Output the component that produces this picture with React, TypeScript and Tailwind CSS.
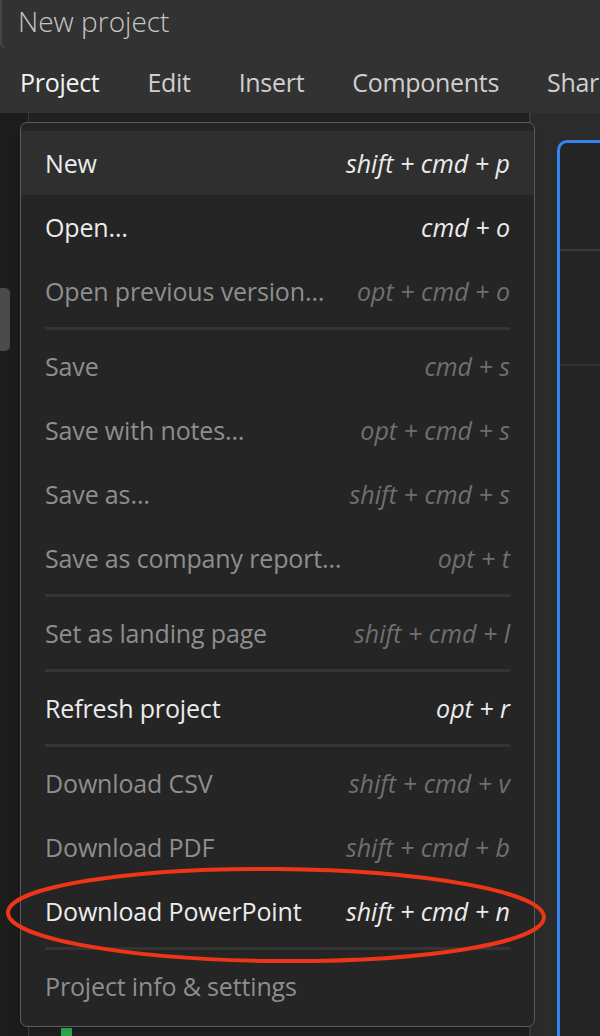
import React from "react";

type Item =
  | { sep: true }
  | { sep?: false; label: string; sc?: string; bright?: boolean; hl?: boolean };

const items: Item[] = [
  { label: "New", sc: "shift + cmd + p", bright: true, hl: true },
  { label: "Open…", sc: "cmd + o", bright: true },
  { label: "Open previous version…", sc: "opt + cmd + o" },
  { sep: true },
  { label: "Save", sc: "cmd + s" },
  { label: "Save with notes…", sc: "opt + cmd + s" },
  { label: "Save as…", sc: "shift + cmd + s" },
  { label: "Save as company report…", sc: "opt + t" },
  { sep: true },
  { label: "Set as landing page", sc: "shift + cmd + l" },
  { sep: true },
  { label: "Refresh project", sc: "opt + r", bright: true },
  { sep: true },
  { label: "Download CSV", sc: "shift + cmd + v" },
  { label: "Download PDF", sc: "shift + cmd + b" },
  { label: "Download PowerPoint", sc: "shift + cmd + n", bright: true },
  { sep: true },
  { label: "Project info & settings" },
];

export default function App() {
  return (
    <div
      className="relative w-[600px] h-[1036px] overflow-hidden bg-[#1c1c1c] flex flex-col"
      style={{ fontFamily: '"Open Sans", "Noto Sans", sans-serif' }}
    >
      {/* Header */}
      <div className="h-[113px] bg-[#323232] flex flex-col shrink-0">
        <div className="h-[50px] flex items-start">
          <div className="w-[5px] h-[48px] border-l-[2px] border-b-[2px] border-[#474747] rounded-bl-[6px]" />
          <div className="ml-[13px] mt-[3px] text-[28px] leading-[36px] font-light text-[#c6c6c6] tracking-[0px]">
            New project
          </div>
        </div>
        <div className="flex items-center gap-[48px] h-[63px] pl-[20px] text-[25px] leading-[30px] tracking-[-0.3px] whitespace-nowrap">
          <span className="text-[#f2f2f2] font-medium">Project</span>
          <span className="text-[#cfcfcf]">Edit</span>
          <span className="text-[#cfcfcf]">Insert</span>
          <span className="text-[#cfcfcf]">Components</span>
          <span className="text-[#cfcfcf]">Share</span>
        </div>
      </div>

      {/* Body */}
      <div className="flex flex-1 min-h-0">
        <div className="w-[28px] shrink-0 bg-[#1c1c1c] pt-[175px]">
          <div className="w-[10px] h-[63px] rounded-r-[5px] bg-[#4a4a4a]" />
        </div>
        <div className="w-[503px] shrink-0 bg-[#202020] border-l-[1.5px] border-r-[2px] border-[#3a3a3a] flex flex-col justify-end pl-[32px]">
          <div className="w-[11px] h-[8px] bg-[#2fae52]" />
        </div>
        <div className="flex-1 bg-[#2b2b2b] pt-[27px] pl-[26px] flex flex-col">
          <div className="flex-1 border-l-[3px] border-t-[3px] border-[#3584f0] rounded-tl-[10px] bg-[#252525] flex flex-col">
            <div className="h-[108px] border-b-[2px] border-[#3a3a3a]" />
            <div className="h-[115px] border-b-[2px] border-[#333333]" />
          </div>
        </div>
      </div>

      {/* Dropdown menu */}
      <div className="absolute left-[20px] top-[122px] w-[515px] bg-[#252525] border-[1.5px] border-[#5c5c5c] rounded-[7px] py-[8px] shadow-lg">
        {items.map((it, i) =>
          it.sep ? (
            <div key={i} className="h-[11px] mx-[24px] pt-[4px]">
              <div className="h-[3px] bg-[#343434]" />
            </div>
          ) : (
            <div
              key={i}
              className={`h-[64px] px-[24px] flex items-center justify-between whitespace-nowrap ${
                it.hl ? "bg-[#2f2f2f]" : ""
              }`}
            >
              <span
                className={`text-[25px] leading-[30px] tracking-[-0.15px] ${
                  it.bright ? "text-[#ececec]" : "text-[#8e8e8e]"
                }`}
              >
                {it.label}
              </span>
              {it.sc && (
                <span
                  className={`text-[25px] leading-[30px] italic tracking-[0px] ${
                    it.bright ? "text-[#ececec]" : "text-[#6f6f6f]"
                  }`}
                >
                  {it.sc}
                </span>
              )}
            </div>
          )
        )}
      </div>

      {/* Red annotation ellipse */}
      <svg
        className="absolute left-0 top-[860px] pointer-events-none"
        width="600"
        height="110"
        viewBox="0 0 600 110"
      >
        <ellipse
          cx="276"
          cy="55"
          rx="268"
          ry="46"
          fill="none"
          stroke="#ee3518"
          strokeWidth="4"
          transform="rotate(0.5 276 55)"
        />
      </svg>
    </div>
  );
}
